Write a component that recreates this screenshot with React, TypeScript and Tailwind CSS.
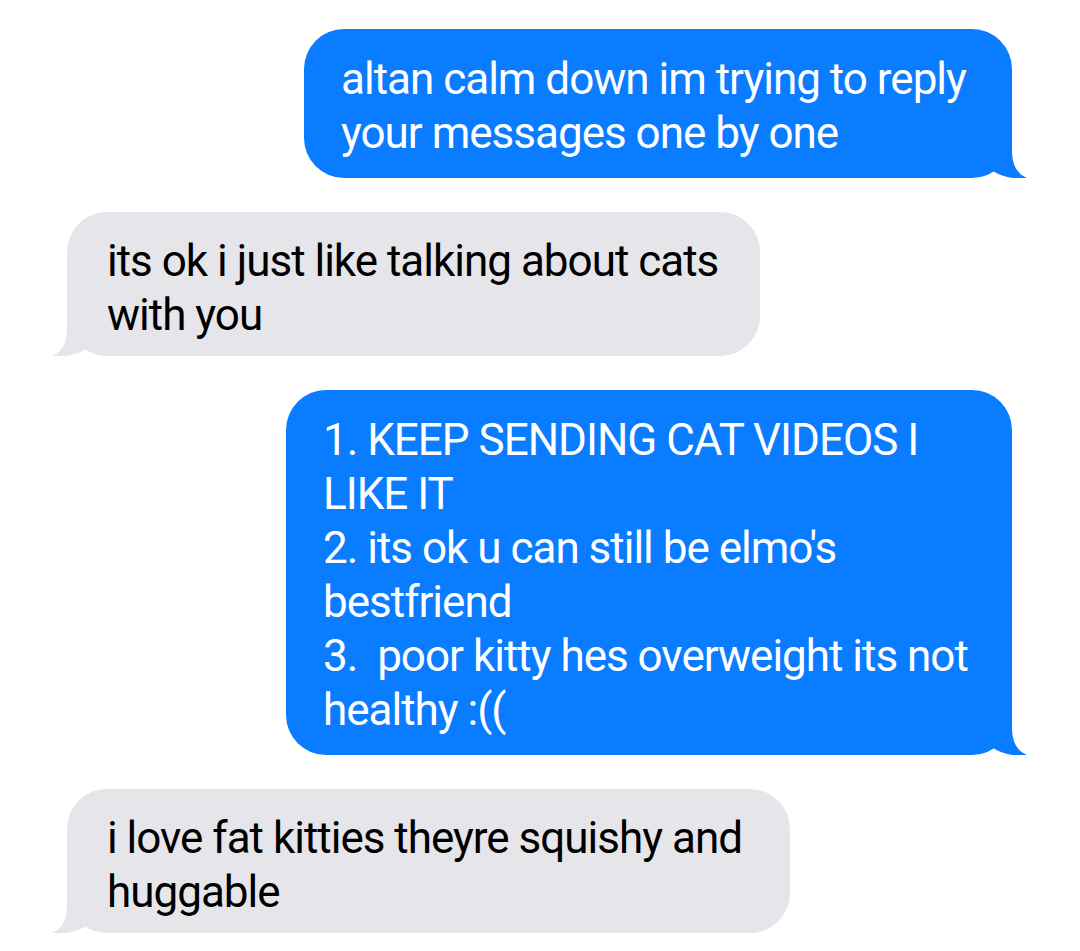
import React from "react";

type Msg = { from: "me" | "them"; width: string; lines: string[] };

const messages: Msg[] = [
  {
    from: "me",
    width: "w-[708px]",
    lines: ["altan calm down im trying to reply", "your messages one by one"],
  },
  {
    from: "them",
    width: "w-[693px]",
    lines: ["its ok i just like talking about cats", "with you"],
  },
  {
    from: "me",
    width: "w-[726px]",
    lines: [
      "1. KEEP SENDING CAT VIDEOS I",
      "LIKE IT",
      "2. its ok u can still be elmo's",
      "bestfriend",
      "3.  poor kitty hes overweight its not",
      "healthy :((",
    ],
  },
  {
    from: "them",
    width: "w-[723px]",
    lines: ["i love fat kitties theyre squishy and", "huggable"],
  },
];

function Tail({ side }: { side: "me" | "them" }) {
  if (side === "me") {
    return (
      <svg
        className="absolute bottom-0 right-[-16px] w-[44px] h-[40px] text-[#0a7cff]"
        viewBox="0 0 44 40"
      >
        <path
          d="M8 0 L28 0 L28 12 C28 27 33 36 43 40 C34 41.5 19 40 9 33 Z"
          fill="currentColor"
        />
      </svg>
    );
  }
  return (
    <svg
      className="absolute bottom-0 left-[-16px] w-[44px] h-[40px] text-[#e5e5ea]"
      viewBox="0 0 44 40"
    >
      <path
        d="M36 0 L16 0 L16 12 C16 27 11 36 1 40 C10 41.5 25 40 35 33 Z"
        fill="currentColor"
      />
    </svg>
  );
}

function Bubble({ msg }: { msg: Msg }) {
  const me = msg.from === "me";
  return (
    <div className={me ? "flex justify-end pr-[68px]" : "flex justify-start pl-[67px]"}>
      <div
        className={`relative ${msg.width} rounded-[40px] ${
          me
            ? "bg-[#0a7cff] text-white pl-[37px] pt-[23px] pb-[18px]"
            : "bg-[#e5e5ea] text-black pl-[40px] pt-[22px] pb-[14px]"
        }`}
      >
        {msg.lines.map((line, i) => (
          <div key={i} className="whitespace-pre leading-[54px]">
            {line}
          </div>
        ))}
        <Tail side={msg.from} />
      </div>
    </div>
  );
}

export default function App() {
  return (
    <div
      className="min-h-[951px] w-[1080px] bg-white pt-[29px] flex flex-col gap-[34px] text-[44px] tracking-[-1px]"
      style={{ fontFamily: "Roboto, 'Liberation Sans', sans-serif" }}
    >
      {messages.map((m, i) => (
        <Bubble key={i} msg={m} />
      ))}
    </div>
  );
}
